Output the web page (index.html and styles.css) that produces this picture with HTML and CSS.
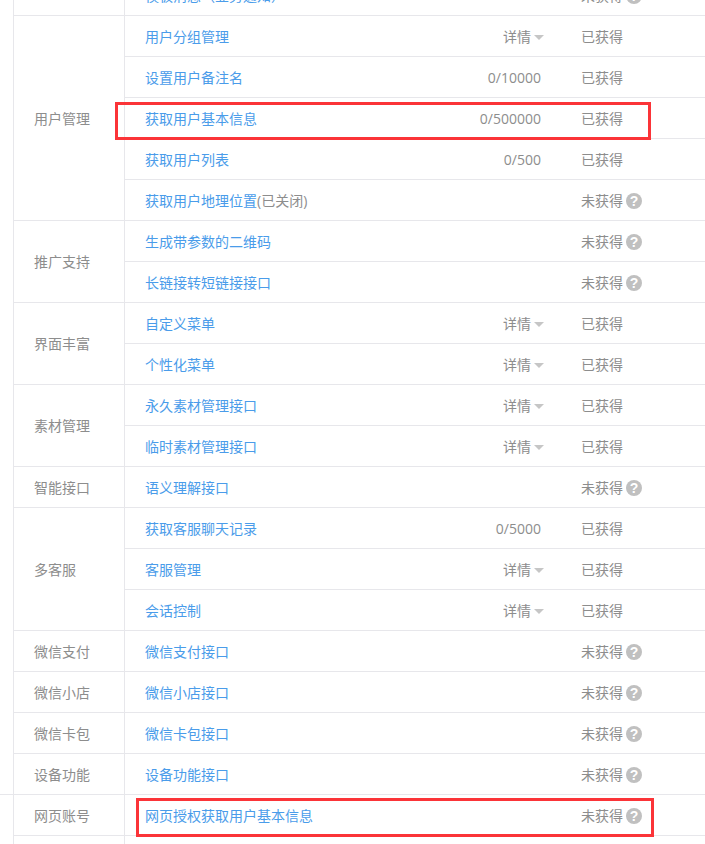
FILE: index.html
```html
<!DOCTYPE html>
<html lang="zh-CN">
<head>
<meta charset="utf-8">
<title>接口权限</title>
<link rel="stylesheet" href="styles.css">
</head>
<body>
<main class="wrap">
<table class="perm">
<colgroup><col class="c0"><col class="c1"><col class="c2"><col class="c3"><col class="c4"></colgroup>
<tbody>
<tr><td class="gutter none" rowspan="12"></td><td class="group"></td><td class="name"><a>模板消息（业务通知）</a></td><td class="quota"></td><td class="status">未获得<i class="help">?</i></td></tr>

<tr><td class="group" rowspan="5">用户管理</td><td class="name"><a>用户分组管理</a></td><td class="quota">详情<b class="caret"></b></td><td class="status">已获得</td></tr>
<tr><td class="name"><a>设置用户备注名</a></td><td class="quota">0/10000</td><td class="status">已获得</td></tr>
<tr><td class="name"><a>获取用户基本信息</a></td><td class="quota">0/500000</td><td class="status">已获得</td></tr>
<tr><td class="name"><a>获取用户列表</a></td><td class="quota">0/500</td><td class="status">已获得</td></tr>
<tr><td class="name"><a>获取用户地理位置</a><span class="muted">(已关闭)</span></td><td class="quota"></td><td class="status">未获得<i class="help">?</i></td></tr>

<tr><td class="group pair" rowspan="2">推广支持</td><td class="name"><a>生成带参数的二维码</a></td><td class="quota"></td><td class="status">未获得<i class="help">?</i></td></tr>
<tr><td class="name"><a>长链接转短链接接口</a></td><td class="quota"></td><td class="status">未获得<i class="help">?</i></td></tr>

<tr><td class="group pair" rowspan="2">界面丰富</td><td class="name"><a>自定义菜单</a></td><td class="quota">详情<b class="caret"></b></td><td class="status">已获得</td></tr>
<tr><td class="name"><a>个性化菜单</a></td><td class="quota">详情<b class="caret"></b></td><td class="status">已获得</td></tr>

<tr><td class="group pair" rowspan="2">素材管理</td><td class="name"><a>永久素材管理接口</a></td><td class="quota">详情<b class="caret"></b></td><td class="status">已获得</td></tr>
<tr><td class="name"><a>临时素材管理接口</a></td><td class="quota">详情<b class="caret"></b></td><td class="status">已获得</td></tr>

<tr><td class="gutter" rowspan="8"></td><td class="group">智能接口</td><td class="name"><a>语义理解接口</a></td><td class="quota"></td><td class="status">未获得<i class="help">?</i></td></tr>

<tr><td class="group" rowspan="3">多客服</td><td class="name"><a>获取客服聊天记录</a></td><td class="quota">0/5000</td><td class="status">已获得</td></tr>
<tr><td class="name"><a>客服管理</a></td><td class="quota">详情<b class="caret"></b></td><td class="status">已获得</td></tr>
<tr><td class="name"><a>会话控制</a></td><td class="quota">详情<b class="caret"></b></td><td class="status">已获得</td></tr>

<tr><td class="group">微信支付</td><td class="name"><a>微信支付接口</a></td><td class="quota"></td><td class="status">未获得<i class="help">?</i></td></tr>
<tr><td class="group">微信小店</td><td class="name"><a>微信小店接口</a></td><td class="quota"></td><td class="status">未获得<i class="help">?</i></td></tr>
<tr><td class="group">微信卡包</td><td class="name"><a>微信卡包接口</a></td><td class="quota"></td><td class="status">未获得<i class="help">?</i></td></tr>
<tr><td class="group">设备功能</td><td class="name"><a>设备功能接口</a></td><td class="quota"></td><td class="status">未获得<i class="help">?</i></td></tr>

<tr><td class="gutter none" rowspan="2"></td><td class="group">网页账号</td><td class="name"><a>网页授权获取用户基本信息</a></td><td class="quota"></td><td class="status">未获得<i class="help">?</i></td></tr>
<tr><td class="group"></td><td class="name"></td><td class="quota"></td><td class="status"></td></tr>
</tbody>
</table>
<div class="mark mark-a"></div>
<div class="mark mark-b"></div>
</main>
</body>
</html>
```
FILE: styles.css
```css
html, body {
  margin: 0;
  padding: 0;
  height: 844px;
  overflow: hidden;
  background: #fff;
}
.wrap {
  position: relative;
  width: 705px;
  height: 844px;
  overflow: hidden;
}
.perm {
  width: 705px;
  table-layout: fixed;
  border-collapse: separate;
  border-spacing: 0;
  margin-top: -25px;
  font: 14px/20px "Open Sans", "Noto Sans CJK SC", sans-serif;
  color: #8d8d8d;
}
.c0 { width: 13px; }
.c1 { width: 111px; }
.c2 { width: 317px; }
.c3 { width: 100px; }
.c4 { width: 164px; }
.perm td {
  box-sizing: border-box;
  height: 41px;
  padding: 2px 0 0;
  border-bottom: 1px solid #e7e7eb;
  vertical-align: middle;
  white-space: nowrap;
}
.perm td.gutter.none { border-bottom: 0; }
.perm td.group {
  border-left: 1px solid #e7e7eb;
  padding-left: 20px;
}
.perm td.group.pair { padding-top: 0; }
.perm td.name {
  border-left: 1px solid #e7e7eb;
  padding-left: 20px;
}
.name a { color: #4a9cea; }
.perm td.quota { text-align: right; }
.perm td.status { padding-left: 40px; }
.muted { color: #8d8d8d; }
.caret {
  display: inline-block;
  width: 0;
  height: 0;
  margin: 0 -3px 2px 3px;
  border-style: solid;
  border-width: 5px 5px 0;
  border-color: #c6c6c6 transparent transparent;
  vertical-align: middle;
}
.help {
  display: inline-block;
  width: 16px;
  height: 16px;
  margin-left: 3px;
  border-radius: 50%;
  background: #c0c0c0;
  color: #fff;
  font: bold 14px/16px "Liberation Sans", sans-serif;
  text-align: center;
  vertical-align: 0;
}
.mark {
  position: absolute;
  box-sizing: border-box;
  border: 3px solid #fb3438;
}
.mark-a { left: 115px; top: 102px; width: 536px; height: 38px; }
.mark-b { left: 136px; top: 798px; width: 518px; height: 39px; }
```
